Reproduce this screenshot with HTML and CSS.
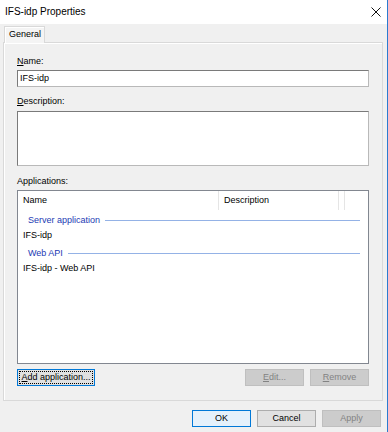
FILE: index.html
```html
<!DOCTYPE html>
<html lang="en">
<head>
  <meta charset="UTF-8" />
  <title>IFS-idp Properties</title>
  <link rel="stylesheet" href="styles.css">
</head>
<body>
  <div class="window">
    <div class="titlebar">
      <span class="title">IFS-idp Properties</span>
      <svg class="close" width="10" height="10" viewBox="0 0 10 10">
        <path d="M0.5 0.5 L9.5 9.5 M9.5 0.5 L0.5 9.5" stroke="#111" stroke-width="1" fill="none" />
      </svg>
    </div>

    <div class="tabs">
      <div class="tab">General</div>
    </div>

    <div class="panel">
      <div class="label label-first"><u>N</u>ame:</div>
      <div class="field">IFS-idp</div>

      <div class="label label-desc"><u>D</u>escription:</div>
      <div class="field textarea"></div>

      <div class="label label-apps">Applications:</div>
      <div class="listview">
        <div class="list-head">
          <div class="col col-name">Name</div>
          <div class="col col-desc">Description</div>
          <div class="col col-rest"></div>
        </div>
        <div class="group"><span>Server application</span><i></i></div>
        <div class="row">IFS-idp</div>
        <div class="group"><span>Web API</span><i></i></div>
        <div class="row">IFS-idp - Web API</div>
      </div>

      <div class="button-row">
        <button class="btn btn-focus"><span class="focus-rect"><u>A</u>dd application...</span></button>
        <div class="spacer"></div>
        <button class="btn" disabled><u>E</u>dit...</button>
        <button class="btn" disabled><u>R</u>emove</button>
      </div>
    </div>

    <div class="footer">
      <button class="btn btn-default">OK</button>
      <button class="btn">Cancel</button>
      <button class="btn" disabled>Apply</button>
    </div>
  </div>
</body>
</html>
```

FILE: styles.css
```css
* {
  box-sizing: border-box;
}
body {
  margin: 0;
  font-family: 'Liberation Sans', Arial, sans-serif;
  font-size: 9px;
  color: #000;
  background: #f0f0f0;
}
.window {
  width: 388px;
  height: 432px;
  background: #f0f0f0;
  border-right: 1px solid #2b7bd0;
  overflow: hidden;
}
.titlebar {
  height: 24px;
  background: #fff;
  display: flex;
  align-items: center;
  padding: 0 6px 0 5px;
}
.title {
  font-size: 10px;
  flex: 1;
  padding-bottom: 1px;
}

/* tabs */
.tabs {
  display: flex;
  padding: 2px 0 0 4px;
  height: 19px;
}
.tab {
  width: 41px;
  height: 17px;
  background: #f4f4f4;
  border: 1px solid #d9d9d9;
  border-bottom: none;
  box-shadow: inset 1px 1px 0 #fff;
  line-height: 15px;
  padding-left: 4px;
  position: relative;
  z-index: 1;
}
.panel {
  margin: -1px 4px 0 3px;
  border: 1px solid #d9d9d9;
  box-shadow: inset 1px 1px 0 #fff;
  padding: 0 13px 14px 13px;
}

.label {
  line-height: 11px;
  height: 11px;
}
.label-first {
  margin-top: 13px;
}
.label-desc {
  margin-top: 9px;
}
.label-apps {
  margin-top: 10px;
}
.field {
  margin-top: 3px;
  height: 17px;
  background: #fff;
  border: 1px solid #7a7a7a;
  border-right-color: #b9b9b9;
  border-bottom-color: #b9b9b9;
  padding: 2px 2px;
  line-height: 11px;
}
.label-desc + .textarea {
  margin-top: 4px;
  height: 55px;
}

/* list view */
.listview {
  margin-top: 3px;
  height: 174px;
  background: #fff;
  border: 1px solid #828790;
}
.list-head {
  display: flex;
  height: 19px;
}
.col {
  line-height: 19px;
  padding-left: 5px;
  border-right: 1px solid #e5e5e5;
}
.col-name {
  width: 201px;
}
.col-desc {
  width: 120px;
}
.col-rest {
  width: 1px;
}
.group {
  display: flex;
  align-items: center;
  height: 18px;
  padding: 2px 8px 0 10px;
  color: #1c3ab4;
}
.group i {
  flex: 1;
  height: 1px;
  background: #94b2e6;
  margin-left: 5px;
  margin-top: 1px;
}
.row {
  height: 15px;
  line-height: 15px;
  padding-left: 5px;
}

/* buttons */
.button-row {
  display: flex;
  gap: 6px;
  margin-top: 5px;
}
.spacer {
  flex: 1;
}
.btn {
  font-family: inherit;
  font-size: 9px;
  height: 17px;
  width: 59px;
  padding: 0;
  background: #e1e1e1;
  border: 1px solid #adadad;
  color: #000;
  line-height: 15px;
}
.btn:disabled {
  background: #cccccc;
  border-color: #bfbfbf;
  color: #838383;
}
.btn-focus {
  width: 78px;
  border-color: #0078d7;
  padding: 1px;
}
.focus-rect {
  display: block;
  border: 1px dotted #000;
  line-height: 11px;
  height: 13px;
}
.btn-default {
  background: #e5f1fb;
  border-color: #0078d7;
}
.footer {
  display: flex;
  justify-content: flex-end;
  gap: 6px;
  padding: 9px 6px 0 0;
}
```
